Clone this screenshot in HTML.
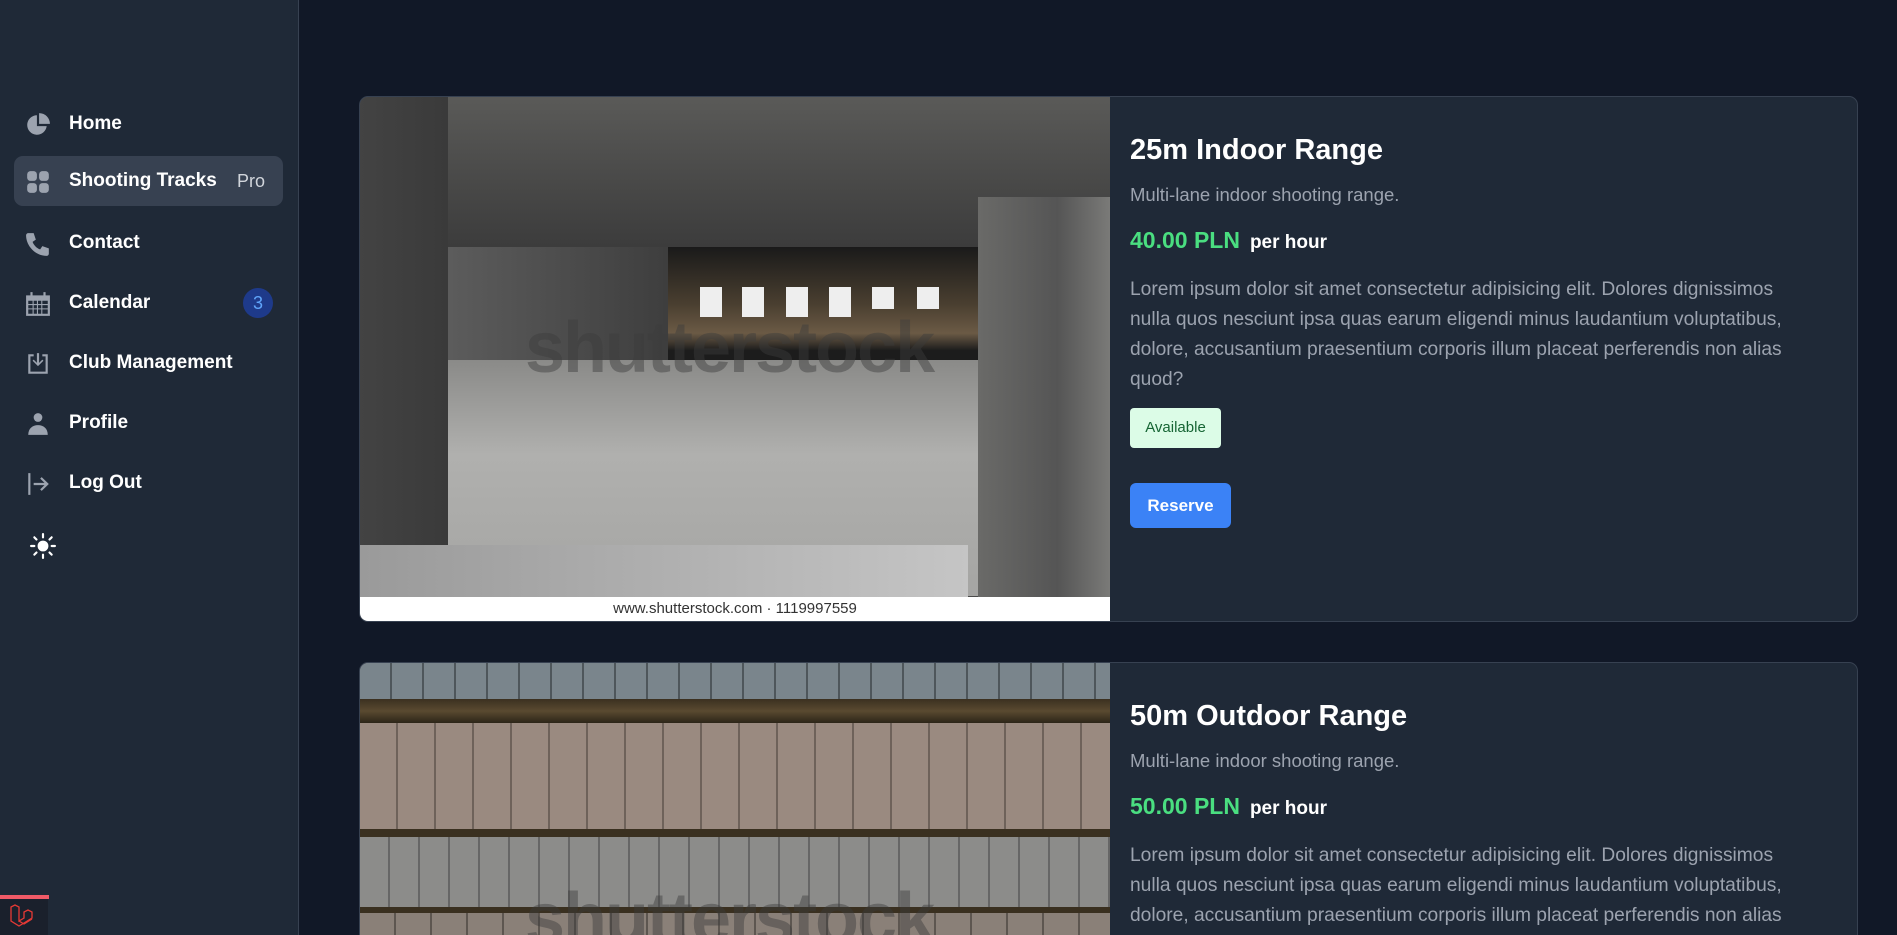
<!DOCTYPE html>
<html><head><meta charset="utf-8"><style>
*{box-sizing:border-box;margin:0;padding:0}
html,body{width:1897px;height:935px;overflow:hidden}
body{background:#111827;font-family:"Liberation Sans",sans-serif;position:relative}
.side{position:absolute;left:0;top:0;width:299px;height:935px;background:#1f2937;border-right:1px solid #374151}
.item{position:absolute;left:14px;width:269px;height:50px;border-radius:9px;color:#fff;font-weight:bold;font-size:19px;display:flex;align-items:center}
.item svg{position:absolute;left:11px;top:13px;width:26px;height:26px;fill:#9ca3af}
.item span.t{position:absolute;left:55px}
.active{background:#374151}
.card{position:absolute;left:359px;width:1499px;background:#1f2937;border:1px solid #374151;border-radius:9px;overflow:hidden}
.img{position:absolute;left:0;top:0;width:750px;height:100%;overflow:hidden}
.txt{position:absolute;left:770px;color:#fff}
h2{font-size:29px;font-weight:bold;position:absolute;top:37px;white-space:nowrap}
.sub{position:absolute;top:87px;font-size:18.5px;color:#9ca3af;white-space:nowrap}
.price{position:absolute;top:130px;white-space:nowrap}
.price b{color:#4ade80;font-size:23px}
.price span{font-size:19px;font-weight:bold;margin-left:10px}
.body{position:absolute;top:178px;font-size:19.2px;line-height:30px;color:#9ca3af;white-space:nowrap}
.d{position:absolute}
</style></head><body>
<div class="side">
 <div class="item" style="top:99px"><svg viewBox="0 0 24 24"><path d="M11 3a9 9 0 1 0 9 10h-9z"/><path d="M13 1v10h10A10 10 0 0 0 13 1z"/></svg><span class="t">Home</span></div>
 <div class="item active" style="top:156px"><svg viewBox="0 0 24 24"><rect x="2" y="2" width="9" height="9" rx="3"/><rect x="13" y="2" width="9" height="9" rx="3"/><rect x="2" y="13" width="9" height="9" rx="3"/><rect x="13" y="13" width="9" height="9" rx="3"/></svg><span class="t">Shooting Tracks</span><span style="position:absolute;right:18px;color:#d1d5db;font-weight:normal;font-size:18px">Pro</span></div>
 <div class="item" style="top:218px"><svg viewBox="0 0 24 24"><path d="M3 2h5l2 6-3 2c1 3 4 6 7 7l2-3 6 2v5c0 1-1 2-2 2C10 23 1 14 1 4c0-1 1-2 2-2z"/></svg><span class="t">Contact</span></div>
 <div class="item" style="top:278px"><svg viewBox="0 0 24 24"><path d="M5 1h2v3H5zM17 1h2v3h-2zM1 4h22v19H1zM3 9v12h18V9zM3 12h18v1H3zm0 4h18v1H3zM7 9h1v12H7zm4 0h1v12h-1zm4 0h1v12h-1z"/></svg><span class="t">Calendar</span><span style="position:absolute;right:10px;width:30px;height:30px;border-radius:50%;background:#1e3a8a;color:#60a5fa;font-weight:normal;font-size:18px;text-align:center;line-height:30px">3</span></div>
 <div class="item" style="top:338px"><svg viewBox="0 0 24 24"><path d="M3 3h5v2H5v14h14V5h-3V3h5v18H3zM11 2h2v9l3-3 1 1-5 5-5-5 1-1 3 3z"/></svg><span class="t">Club Management</span></div>
 <div class="item" style="top:398px"><svg viewBox="0 0 24 24"><circle cx="12" cy="6" r="4"/><path d="M3 22c0-6 4-9 9-9s9 3 9 9z"/></svg><span class="t">Profile</span></div>
 <div class="item" style="top:458px"><svg viewBox="0 0 24 24"><path d="M3 2h2v20H3zM8 11h10l-4-4 1.4-1.4L22 12l-6.6 6.4L14 17l4-4H8z"/></svg><span class="t">Log Out</span></div>
 <svg style="position:absolute;left:30px;top:533px;width:26px;height:26px" viewBox="0 0 24 24" fill="#fff" stroke="#fff" stroke-width="2" stroke-linecap="round"><circle cx="12" cy="12" r="5" stroke="none"/><path d="M12 1v3M12 20v3M1 12h3M20 12h3M4 4l2 2M18 18l2 2M4 20l2-2M18 6l2-2"/></svg>
 <div style="position:absolute;left:0;top:895px;width:49px;height:4px;background:#f05a67"></div>
 <div style="position:absolute;left:0;top:899px;width:48px;height:36px;background:#1a202c"></div>
 <svg style="position:absolute;left:8px;top:903px;width:28px;height:28px" viewBox="0 0 28 28" fill="none" stroke="#e53935" stroke-width="1.3"><path d="M3 4l4-2 4 2v14l5-3V9l4-2 4 2v6l-8 5-5 3-8-5z M11 18l5 3 8-5"/></svg>
</div>

<div class="card" style="top:96px;height:526px">
 <div class="img" style="background:#4b4b4b">
  <div class="d" style="left:0;top:0;width:750px;height:150px;background:linear-gradient(#5a5a58,#3c3c3c)"></div>
  <div class="d" style="left:88px;top:150px;width:220px;height:250px;background:linear-gradient(90deg,#5c5c5c,#3e3e3e)"></div>
  <div class="d" style="left:308px;top:150px;width:310px;height:115px;background:linear-gradient(#1a1a1a,#4a3f30 50%,#6b5a45 75%,#1c1c1c 90%)"></div>
  <div class="d" style="left:618px;top:100px;width:132px;height:430px;background:linear-gradient(90deg,#6a6a68,#555 60%,#7a7a78)"></div>
  <div class="d" style="left:88px;top:263px;width:530px;height:236px;background:linear-gradient(#8a8a88,#b0b0ae 40%,#a5a5a3)"></div>
  <div class="d" style="left:0;top:0;width:88px;height:500px;background:linear-gradient(90deg,#434343,#3a3a3a)"></div>
  <div class="d" style="left:0;top:448px;width:608px;height:52px;background:linear-gradient(90deg,#9a9a9a,#c5c5c5)"></div>
  <div class="d" style="left:340px;top:190px;width:22px;height:30px;background:#eee"></div>
  <div class="d" style="left:382px;top:190px;width:22px;height:30px;background:#eee"></div>
  <div class="d" style="left:426px;top:190px;width:22px;height:30px;background:#eee"></div>
  <div class="d" style="left:469px;top:190px;width:22px;height:30px;background:#eee"></div>
  <div class="d" style="left:512px;top:190px;width:22px;height:22px;background:#eee"></div>
  <div class="d" style="left:557px;top:190px;width:22px;height:22px;background:#eee"></div>
  <div class="d" style="left:165px;top:210px;font-size:72px;font-weight:bold;color:rgba(60,60,60,.45);letter-spacing:-2px">shutterstock</div>
  <div class="d" style="left:0;top:500px;width:750px;height:26px;background:#fff;color:#333;font-size:15px;text-align:center;line-height:24px">www.shutterstock.com · 1119997559</div>
 </div>
 <div class="txt">
  <h2>25m Indoor Range</h2>
  <div class="sub">Multi-lane indoor shooting range.</div>
  <div class="price"><b>40.00 PLN</b><span>per hour</span></div>
  <div class="body">Lorem ipsum dolor sit amet consectetur adipisicing elit. Dolores dignissimos<br>nulla quos nesciunt ipsa quas earum eligendi minus laudantium voluptatibus,<br>dolore, accusantium praesentium corporis illum placeat perferendis non alias<br>quod?</div>
  <div style="position:absolute;top:311px;width:91px;height:40px;background:#dcfce7;border-radius:4px;color:#166534;font-size:15px;text-align:center;line-height:40px">Available</div>
  <div style="position:absolute;top:386px;width:101px;height:45px;background:#3b82f6;border-radius:6px;color:#fff;font-size:17px;font-weight:bold;text-align:center;line-height:45px">Reserve</div>
 </div>
</div>

<div class="card" style="top:662px;height:290px">
 <div class="img" style="background:repeating-linear-gradient(90deg,#8a8078 0 34px,#5d5650 34px 36px)">
  <div class="d" style="left:0;top:0;width:750px;height:44px;background:repeating-linear-gradient(90deg,#7a858c 0 30px,#4e565b 30px 32px)"></div>
  <div class="d" style="left:0;top:36px;width:750px;height:24px;background:linear-gradient(#3b3020,#5a4a30,#2c2518)"></div>
  <div class="d" style="left:0;top:60px;width:750px;height:106px;background:repeating-linear-gradient(90deg,#9a8a80 0 36px,#6e625a 36px 38px)"></div>
  <div class="d" style="left:0;top:166px;width:750px;height:8px;background:#3a3020"></div>
  <div class="d" style="left:0;top:174px;width:750px;height:70px;background:repeating-linear-gradient(90deg,#8c8c8a 0 28px,#666 28px 30px)"></div>
  <div class="d" style="left:0;top:244px;width:750px;height:6px;background:#3a3020"></div>
  <div class="d" style="left:165px;top:215px;font-size:72px;font-weight:bold;color:rgba(60,60,60,.45);letter-spacing:-2px">shutterstock</div>
 </div>
 <div class="txt">
  <h2>50m Outdoor Range</h2>
  <div class="sub">Multi-lane indoor shooting range.</div>
  <div class="price"><b>50.00 PLN</b><span>per hour</span></div>
  <div class="body">Lorem ipsum dolor sit amet consectetur adipisicing elit. Dolores dignissimos<br>nulla quos nesciunt ipsa quas earum eligendi minus laudantium voluptatibus,<br>dolore, accusantium praesentium corporis illum placeat perferendis non alias<br>quod?</div>
 </div>
</div>
</body></html>
